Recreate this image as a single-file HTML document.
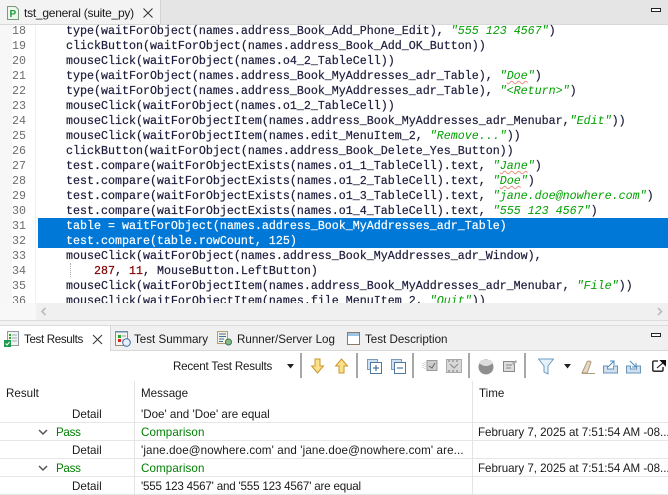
<!DOCTYPE html>
<html><head><meta charset="utf-8"><style>
html,body{margin:0;padding:0;background:#fff}
#p{position:relative;width:668px;height:495px;overflow:hidden;background:#fff;font-family:"Liberation Sans",sans-serif;font-size:12px;color:#1a1a1a}
#p div,#p svg{position:absolute}
.l{left:66px;height:15px;line-height:15px;white-space:pre;font:11.67px/15px "Liberation Mono",monospace;color:#1c1c3c;-webkit-text-stroke:.2px}
.n{left:12px;height:15px;white-space:pre;font:11.67px/15px "Liberation Mono",monospace;color:#6d6d6d}
i{color:#00a000;font-style:italic;-webkit-text-stroke:0}
.t{white-space:nowrap;font-size:11.6px;line-height:16px}
u{text-decoration:underline wavy #e89080 1px;text-underline-offset:1px}
.g{color:#008000}
.r{left:0;width:668px;height:1px;background:#e6e6e6}
</style></head><body><div id="p">
<div style="left:0;top:0;width:668px;height:25px;background:#e5e5e5"></div>
<div style="left:0;top:0;width:160px;height:25px;background:#f3f3f3;border-right:1px solid #d4d4d4"></div>
<div style="left:0;top:24px;width:668px;height:1px;background:#d8d8d8"></div>
<svg style="left:7px;top:6px" width="12" height="14"><path d="M.5.5h8l3 3v10H.5z" fill="#eef7ee" stroke="#7a9a80"/><text x="2.5" y="11" font-family="Liberation Sans" font-size="10" font-weight="bold" fill="#1d9a3a">P</text></svg>
<div class="t" style="left:24px;top:5px;font-size:12px;letter-spacing:-.25px">tst_general (suite_py)</div>
<svg style="left:142px;top:7px" width="12" height="12"><path d="M1.5 1.5l9 9M10.5 1.500l-9 9" stroke="#333" fill="none"/></svg>
<div style="left:651px;top:8px;width:8px;height:2px;border:1px solid #222;background:#fff"></div>

<div style="left:0;top:25px;width:12px;height:278px;background:#f7f7f7"></div>
<div style="left:35px;top:25px;width:1px;height:278px;background:#f0f0f0"></div>
<div style="left:38px;top:218px;width:630px;height:30px;background:#0078d7"></div>
<div class="n" style="top:24px">18</div><div class="n" style="top:39px">19</div><div class="n" style="top:54px">20</div><div class="n" style="top:69px">21</div><div class="n" style="top:84px">22</div><div class="n" style="top:99px">23</div><div class="n" style="top:114px">24</div><div class="n" style="top:129px">25</div><div class="n" style="top:144px">26</div><div class="n" style="top:159px">27</div><div class="n" style="top:174px">28</div><div class="n" style="top:189px">29</div><div class="n" style="top:204px">30</div><div class="n" style="top:219px">31</div><div class="n" style="top:234px">32</div><div class="n" style="top:249px">33</div><div class="n" style="top:264px">34</div><div class="n" style="top:279px">35</div><div class="n" style="top:294px">36</div>
<div class="l" style="top:24px">type(waitForObject(names.address_Book_Add_Phone_Edit), <i>"555 123 4567"</i>)</div>
<div class="l" style="top:39px">clickButton(waitForObject(names.address_Book_Add_OK_Button))</div>
<div class="l" style="top:54px">mouseClick(waitForObject(names.o4_2_TableCell))</div>
<div class="l" style="top:69px">type(waitForObject(names.address_Book_MyAddresses_adr_Table), <i>"<u>Doe</u>"</i>)</div>
<div class="l" style="top:84px">type(waitForObject(names.address_Book_MyAddresses_adr_Table), <i>"&lt;Return&gt;"</i>)</div>
<div class="l" style="top:99px">mouseClick(waitForObject(names.o1_2_TableCell))</div>
<div class="l" style="top:114px">mouseClick(waitForObjectItem(names.address_Book_MyAddresses_adr_Menubar,<i>"Edit"</i>))</div>
<div class="l" style="top:129px">mouseClick(waitForObjectItem(names.edit_MenuItem_2, <i>"Remove..."</i>))</div>
<div class="l" style="top:144px">clickButton(waitForObject(names.address_Book_Delete_Yes_Button))</div>
<div class="l" style="top:159px">test.compare(waitForObjectExists(names.o1_1_TableCell).text, <i>"<u>Jane</u>"</i>)</div>
<div class="l" style="top:174px">test.compare(waitForObjectExists(names.o1_2_TableCell).text, <i>"<u>Doe</u>"</i>)</div>
<div class="l" style="top:189px">test.compare(waitForObjectExists(names.o1_3_TableCell).text, <i>"jane.doe@nowhere.com"</i>)</div>
<div class="l" style="top:204px">test.compare(waitForObjectExists(names.o1_4_TableCell).text, <i>"555 123 4567"</i>)</div>
<div class="l" style="top:219px;color:#fff">table = waitForObject(names.address_Book_MyAddresses_adr_Table)</div>
<div class="l" style="top:234px;color:#fff">test.compare(table.rowCount, 125)</div>
<div class="l" style="top:249px">mouseClick(waitForObject(names.address_Book_MyAddresses_adr_Window),</div>
<div class="l" style="top:264px;left:94px"><span style="color:#800000">287</span>, <span style="color:#800000">11</span>, MouseButton.LeftButton)</div>
<div style="left:70px;top:263px;height:14px;border-left:1px dotted #aaa"></div>
<div class="l" style="top:279px">mouseClick(waitForObjectItem(names.address_Book_MyAddresses_adr_Menubar, <i>"File"</i>))</div>
<div class="l" style="top:294px">mouseClick(waitForObjectItem(names.file_MenuItem_2, <i>"Quit"</i>))</div>

<div style="left:0;top:303px;width:668px;height:17px;background:#f0f0f0"></div>
<div style="left:0;top:303px;width:36px;height:17px;background:#f8f8f8"></div>
<svg style="left:40px;top:307px" width="8" height="9"><path d="M5.500 1L2 4.500l3.500 3.500" stroke="#bbb" stroke-width="1.600" fill="none"/></svg>
<svg style="left:656px;top:307px" width="8" height="9"><path d="M2 1l3.500 3.500L2 8" stroke="#bbb" stroke-width="1.600" fill="none"/></svg>
<div style="left:0;top:320px;width:668px;height:1px;background:#dcdcdc"></div>
<div style="left:0;top:321px;width:668px;height:4px;background:#f3f3f3"></div>
<div style="left:0;top:325px;width:668px;height:1px;background:#dcdcdc"></div>
<div style="left:0;top:326px;width:668px;height:24px;background:#f0f0f0"></div>
<div style="left:111px;top:350px;width:557px;height:1px;background:#d8d8d8"></div>
<div style="left:0;top:326px;width:110px;height:25px;background:#fff;border-right:1px solid #d6d6d6"></div>

<svg style="left:4px;top:331px" width="16" height="16"><path d="M3.500.5h11v14h-11z" fill="#f5f5f0" stroke="#8d9aa5"/><path d="M8 4h5M8 7h5M8 10h5" stroke="#9ab"/><path d="M5 3h2v2H5zM5 6h2v2H5z" fill="#2a2"/><rect x="0" y="9" width="7" height="7" fill="#1e9a50"/><path d="M1.500 12.500l1.500 1.500L5.500 11" stroke="#fff" fill="none"/></svg>
<div class="t" style="left:24px;top:332px;letter-spacing:-.35px">Test Results</div>
<svg style="left:92px;top:334px" width="11" height="11"><path d="M1 1l9 9M10 1l-9 9" stroke="#333" fill="none"/></svg>
<svg style="left:115px;top:331px" width="16" height="16"><path d="M.5.5h12v14H.5z" fill="#f5f5f0" stroke="#998877"/><path d="M0 .5h13" stroke="#6e8ca8" stroke-width="2"/><rect x="3" y="4" width="3" height="3" fill="#2a2"/><rect x="3" y="8" width="3" height="3" fill="#d22"/><path d="M7 5h4M7 9h3" stroke="#99a"/><circle cx="11.500" cy="11.500" r="3.800" fill="#e8f0f8" stroke="#3a6ea5"/></svg>
<div class="t" style="left:134px;top:332px">Test Summary</div>
<svg style="left:217px;top:331px" width="16" height="16"><path d="M.5.500h10v12H.5z" fill="#f6f2e4" stroke="#b0a070"/><path d="M2 3h7M2 5.500h7M2 8h5M2 10.500h4" stroke="#3a6ea5"/><circle cx="11.500" cy="11" r="3" fill="#8b8" stroke="#375"/></svg>
<div class="t" style="left:237px;top:332px">Runner/Server Log</div>
<svg style="left:347px;top:332px" width="14" height="14"><rect x=".5" y=".5" width="12" height="12" fill="#fff" stroke="#8a7a6a"/><rect x="1" y="1" width="11" height="3" fill="#9cc4e4"/></svg>
<div class="t" style="left:365px;top:332px">Test Description</div>
<div style="left:651px;top:333px;width:8px;height:2px;border:1px solid #222;background:#fff"></div>

<div class="t" style="left:173px;top:359px;letter-spacing:-.2px">Recent Test Results</div>
<svg style="left:286px;top:364px" width="9" height="5"><path d="M1 0h7L4.500 4.500z" fill="#222"/></svg>
<div style="left:300px;top:353px;width:2px;height:25px;background:#a8a8a8"></div>
<div style="left:356px;top:353px;width:2px;height:25px;background:#a8a8a8"></div>
<div style="left:412px;top:353px;width:2px;height:25px;background:#a8a8a8"></div>
<div style="left:468px;top:353px;width:2px;height:25px;background:#a8a8a8"></div>
<div style="left:524px;top:353px;width:2px;height:25px;background:#a8a8a8"></div>
<svg style="left:311px;top:358px" width="14" height="16"><path d="M4 1h5v7h3.500L6.500 15 .5 8H4z" fill="#fbe08a" stroke="#c8962a"/></svg>
<svg style="left:335px;top:358px" width="14" height="16"><path d="M4 15h5V8h3.500L6.500 1 .5 8H4z" fill="#fbe08a" stroke="#c8962a"/></svg>
<svg style="left:367px;top:359px" width="15" height="15"><rect x=".5" y=".5" width="10" height="10" fill="#cfe0f0" stroke="#7d9bba"/><rect x="3.500" y="3.500" width="11" height="11" fill="#fff" stroke="#4f78a0"/><path d="M6 9h6M9 6v6" stroke="#2a5a8a"/></svg>
<svg style="left:391px;top:359px" width="15" height="15"><rect x=".5" y=".5" width="10" height="10" fill="#cfe0f0" stroke="#7d9bba"/><rect x="3.500" y="3.500" width="11" height="11" fill="#fff" stroke="#4f78a0"/><path d="M6 9h6" stroke="#2a5a8a"/></svg>
<svg style="left:422px;top:358px" width="16" height="16"><rect x="5" y="2.500" width="10" height="10" fill="#ccc" stroke="#999"/><path d="M7 8l3 2 3-5" stroke="#666" fill="none"/><path d="M1 5v6M3 4v8" stroke="#bbb" stroke-dasharray="1 1"/></svg>
<svg style="left:446px;top:358px" width="16" height="16"><rect x=".5" y="1.500" width="15" height="13" fill="#d8d8d8" stroke="#aaa"/><path d="M2 3h2M6 3h2M10 3h2M2 13h2M6 13h2M10 13h2" stroke="#777"/><path d="M4 6l4 4 4-4" stroke="#888" fill="none"/></svg>
<svg style="left:478px;top:359px" width="16" height="16"><circle cx="8" cy="8" r="7.500" fill="#8e8e8e"/><path d="M1 4q7 6 14 0L13 1H3z" fill="#ddd"/></svg>
<svg style="left:503px;top:359px" width="15" height="14"><rect x=".5" y="2.500" width="11" height="10" fill="#ddd" stroke="#888"/><path d="M3 6h6M3 9h5" stroke="#888"/><path d="M9 4l4-3 1 2-4 3z" fill="#aaa"/></svg>
<svg style="left:538px;top:358px" width="16" height="17"><path d="M.5 1h15L10 8v8l-4-2V8z" fill="#e6f1fa" stroke="#6a9cc4"/></svg>
<svg style="left:563px;top:364px" width="9" height="5"><path d="M1 0h7L4.500 4.500z" fill="#222"/></svg>
<svg style="left:581px;top:359px" width="15" height="16"><path d="M1 14l5-11q2-2 4 0l-2 6-2 5z" fill="#e6d8c4" stroke="#b09a7c"/><path d="M1 14.500h13" stroke="#b09a7c"/></svg>
<svg style="left:603px;top:358px" width="16" height="16"><path d="M.500 8v7h14V8h-4v3h-6V8z" fill="#cfe0f0" stroke="#6a94ba"/><path d="M5 9l6-6M7 3h4v4" stroke="#4a88c0" fill="none"/></svg>
<svg style="left:626px;top:358px" width="16" height="16"><path d="M.5 8v7h14V8h-4v3h-6V8z" fill="#cfe0f0" stroke="#6a94ba"/><path d="M4 3l6 6M10 5v4H6" stroke="#4a88c0" fill="none"/></svg>
<svg style="left:652px;top:359px" width="15" height="14"><path d="M6 2H2Q.8 2 .8 3v8q0 1.200 1.200 1.200h8q1 0 1-1.200V8" stroke="#111" stroke-width="1.300" fill="none"/><path d="M5 9l7-6M8.500 1.500h5v5z" stroke="#111" fill="#111"/></svg>

<div style="left:134px;top:381px;width:1px;height:114px;background:#e4e4e4"></div>
<div style="left:472px;top:381px;width:1px;height:114px;background:#e4e4e4"></div>
<div class="t" style="left:6px;top:386px">Result</div>
<div class="t" style="left:141px;top:386px">Message</div>
<div class="t" style="left:479px;top:386px">Time</div>
<div class="r" style="top:422px"></div><div class="r" style="top:440px"></div><div class="r" style="top:458px"></div><div class="r" style="top:476px"></div><div class="r" style="top:494px"></div>
<div class="t" style="left:72px;top:407px">Detail</div>
<div class="t" style="left:141px;top:407px">'Doe' and 'Doe' are equal</div>
<svg style="left:38px;top:429px" width="10" height="7"><path d="M1 1l4 4 4-4" stroke="#555" stroke-width="1.500" fill="none"/></svg>
<div class="t g" style="left:56px;top:425px;letter-spacing:-.3px">Pass</div>
<div class="t g" style="left:141px;top:425px;letter-spacing:.1px">Comparison</div>
<div class="t" style="left:478px;top:425px;letter-spacing:-.03px">February 7, 2025 at 7:51:54 AM -08...</div>
<div class="t" style="left:72px;top:443px">Detail</div>
<div class="t" style="left:141px;top:443px;letter-spacing:.12px">'jane.doe@nowhere.com' and 'jane.doe@nowhere.com' are...</div>
<svg style="left:38px;top:465px" width="10" height="7"><path d="M1 1l4 4 4-4" stroke="#555" stroke-width="1.500" fill="none"/></svg>
<div class="t g" style="left:56px;top:461px;letter-spacing:-.3px">Pass</div>
<div class="t g" style="left:141px;top:461px;letter-spacing:.1px">Comparison</div>
<div class="t" style="left:478px;top:461px;letter-spacing:-.03px">February 7, 2025 at 7:51:54 AM -08...</div>
<div class="t" style="left:72px;top:479px">Detail</div>
<div class="t" style="left:141px;top:479px;letter-spacing:-.19px">'555 123 4567' and '555 123 4567' are equal</div>
</div></body></html>
